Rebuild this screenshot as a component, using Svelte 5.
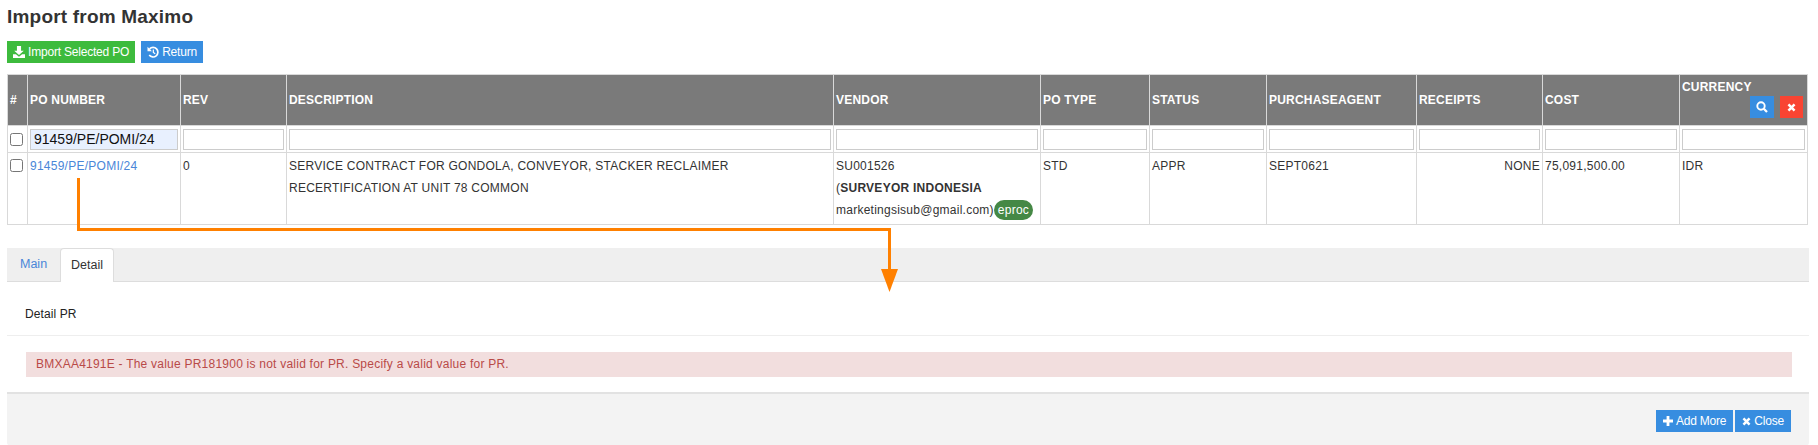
<script>
  const columns = [
    { label: "#", width: 20 },
    { label: "PO NUMBER", width: 153 },
    { label: "REV", width: 106 },
    { label: "DESCRIPTION", width: 547 },
    { label: "VENDOR", width: 207 },
    { label: "PO TYPE", width: 109 },
    { label: "STATUS", width: 117 },
    { label: "PURCHASEAGENT", width: 150 },
    { label: "RECEIPTS", width: 126 },
    { label: "COST", width: 137 },
    { label: "CURRENCY", width: 128 },
  ];
</script>

<div class="page">
  <h1>Import from Maximo</h1>

  <div class="toolbar">
    <button class="btn green">
      <svg viewBox="0 0 14 14" width="12" height="12"><path d="M4.6 0h4.8v5.4h3.2L7 10.6 1.4 5.4h3.2zM0 9.6h3.4L7 12.4l3.6-2.8H14V14H0z" fill="currentColor" /></svg>
      Import Selected PO
    </button>
    <button class="btn blue">
      <svg viewBox="0 0 14 14" width="12" height="12"><path d="M3 3.4A5.6 5.6 0 1 1 2.6 10.6" fill="none" stroke="currentColor" stroke-width="2" /><path d="M0.6 1v5.2h5.2z" fill="currentColor" /><path d="M7.4 4v3.6l2.2 1.4" fill="none" stroke="currentColor" stroke-width="1.4" /></svg>
      Return
    </button>
  </div>

  <table>
    <colgroup>
      {#each columns as col}
        <col style="width: {col.width}px" />
      {/each}
    </colgroup>
    <thead>
      <tr>
        {#each columns as col}
          {#if col.label === "CURRENCY"}
            <th class="currency">
              {col.label}
              <div class="head-actions">
                <span class="icon-btn blue">
                  <svg viewBox="0 0 12 12" width="12" height="12"><circle cx="5" cy="5" r="3.7" fill="none" stroke="currentColor" stroke-width="1.9" /><path d="M7.8 7.8L11 11" stroke="currentColor" stroke-width="2.3" /></svg>
                </span>
                <span class="icon-btn red narrow">
                  <svg viewBox="0 0 10 10" width="9" height="9"><path d="M1.6 1.6l6.8 6.8M8.4 1.6L1.6 8.4" stroke="currentColor" stroke-width="2.8" /></svg>
                </span>
              </div>
            </th>
          {:else}
            <th>{col.label}</th>
          {/if}
        {/each}
      </tr>
      <tr class="filters">
        <td class="check"><input type="checkbox" /></td>
        <td><input class="filter filled" type="text" value="91459/PE/POMI/24" /></td>
        {#each columns.slice(2) as col}
          <td><input class="filter" type="text" aria-label={col.label} /></td>
        {/each}
      </tr>
    </thead>
    <tbody>
      <tr>
        <td class="check"><input type="checkbox" /></td>
        <td><a href="#po">91459/PE/POMI/24</a></td>
        <td>0</td>
        <td>SERVICE CONTRACT FOR GONDOLA, CONVEYOR, STACKER RECLAIMER RECERTIFICATION AT UNIT 78 COMMON</td>
        <td>SU001526<br />(<b>SURVEYOR INDONESIA</b><br /><span class="nowrap">marketingsisub@gmail.com)<span class="badge">eproc</span></span></td>
        <td>STD</td>
        <td>APPR</td>
        <td>SEPT0621</td>
        <td class="right">NONE</td>
        <td>75,091,500.00</td>
        <td>IDR</td>
      </tr>
    </tbody>
  </table>

  <div class="panel">
    <div class="tabs">
      <a class="tab" href="#main">Main</a>
      <span class="tab active">Detail</span>
    </div>
    <div class="panel-title">Detail PR</div>
    <div class="panel-body">
      <div class="alert">BMXAA4191E - The value PR181900 is not valid for PR. Specify a valid value for PR.</div>
    </div>
    <div class="panel-footer">
      <button class="btn blue wide">
        <svg viewBox="0 0 10 10" width="10" height="10"><path d="M5 0v10M0 5h10" stroke="currentColor" stroke-width="2.8" /></svg>
        Add More
      </button>
      <button class="btn blue wide">
        <svg viewBox="0 0 10 10" width="9" height="9"><path d="M1.6 1.6l6.8 6.8M8.4 1.6L1.6 8.4" stroke="currentColor" stroke-width="2.8" /></svg>
        Close
      </button>
    </div>
  </div>

  <svg class="arrow" width="1818" height="445" viewBox="0 0 1818 445">
    <path d="M78.5 178V229.5H889.5V270" fill="none" stroke="#ff8000" stroke-width="3" />
    <path d="M881 269H898L889.5 292z" fill="#ff8000" />
  </svg>
</div>

<style>
  :global(body) {
    margin: 0;
    background: #fff;
    font-family: "Liberation Sans", Arial, sans-serif;
    font-size: 12px;
    color: #333;
  }

  .page {
    position: relative;
    width: 1818px;
    height: 445px;
    overflow: hidden;
    padding: 7px 9px 0 7px;
    box-sizing: border-box;
  }

  h1 {
    margin: 0;
    font-size: 19px;
    line-height: 20px;
    font-weight: bold;
    color: #333;
    letter-spacing: 0.2px;
  }

  .toolbar {
    display: flex;
    gap: 6px;
    margin-top: 14px;
  }

  .btn {
    display: inline-flex;
    align-items: center;
    gap: 3px;
    height: 22px;
    padding: 0 6px;
    border: 0;
    font-family: inherit;
    font-size: 12px;
    letter-spacing: -0.2px;
    color: #fff;
  }

  .btn.wide {
    padding: 0 7px;
  }

  .green {
    background: #3dbb3d;
  }

  .blue {
    background: #378de0;
  }

  .red {
    background: #f94432;
  }

  table {
    width: 1801px;
    margin-top: 11px;
    border-collapse: collapse;
    table-layout: fixed;
    letter-spacing: 0.25px;
  }

  th,
  td {
    box-sizing: border-box;
    border: 1px solid #d9d9d9;
    padding: 0 2px;
    text-align: left;
    vertical-align: top;
    overflow: hidden;
  }

  th {
    height: 51px;
    background: #7a7a7a;
    color: #fff;
    font-size: 12px;
    letter-spacing: 0.2px;
    vertical-align: middle;
    white-space: nowrap;
  }

  th.currency {
    vertical-align: top;
    padding-top: 5px;
    line-height: 14px;
  }

  .head-actions {
    display: flex;
    justify-content: flex-end;
    gap: 6px;
    padding-right: 2px;
    margin-top: 2px;
  }

  .icon-btn {
    display: inline-flex;
    align-items: center;
    justify-content: center;
    width: 24px;
    height: 22px;
    color: #fff;
  }

  .icon-btn.narrow {
    width: 23px;
  }

  .filters td {
    height: 27px;
    vertical-align: middle;
  }

  .filter {
    display: block;
    box-sizing: border-box;
    width: 100%;
    height: 21px;
    padding: 0 3px;
    border: 1px solid #ccc;
    font-family: inherit;
    font-size: 14px;
    color: #111;
    background: #fff;
  }

  .filter.filled {
    background: #e8f0fe;
  }

  input[type="checkbox"] {
    display: block;
    width: 13px;
    height: 13px;
    margin: 0;
  }

  tbody td {
    height: 72px;
    padding-top: 2px;
    line-height: 22px;
  }

  .check {
    padding: 3px 2px;
  }

  tbody td:first-child {
    padding-top: 6px;
  }

  .right {
    text-align: right;
  }

  .nowrap {
    white-space: nowrap;
  }

  a {
    color: #4a86d8;
    text-decoration: none;
  }

  .badge {
    display: inline-block;
    padding: 0 4px;
    border-radius: 10px;
    background: #458845;
    color: #fff;
    line-height: 20px;
  }

  .panel {
    margin-top: 23px;
    width: 1802px;
  }

  .tabs {
    display: flex;
    height: 34px;
    box-sizing: border-box;
    background: #efefef;
    border-bottom: 1px solid #ddd;
  }

  .tab {
    padding: 9px 13px 0;
    font-size: 12.5px;
    height: 34px;
    box-sizing: border-box;
  }

  .tab.active {
    padding: 9px 10px 0;
    background: #fff;
    border: 1px solid #ddd;
    border-bottom: 0;
    border-radius: 4px 4px 0 0;
  }

  .panel-title {
    height: 53px;
    line-height: 65px;
    padding-left: 18px;
    border-bottom: 1px solid #eee;
    color: #222;
    letter-spacing: 0.1px;
  }

  .panel-body {
    padding: 16px 17px 15px 19px;
    border-bottom: 2px solid #e2e2e2;
  }

  .alert {
    height: 25px;
    line-height: 25px;
    padding-left: 10px;
    background: #f2dede;
    color: #b94a48;
    letter-spacing: 0.23px;
  }

  .panel-footer {
    display: flex;
    justify-content: flex-end;
    gap: 2px;
    height: 52px;
    padding: 16px 18px 0 0;
    box-sizing: border-box;
    background: #f3f3f3;
    border-radius: 0 0 4px 4px;
  }

  .arrow {
    position: absolute;
    left: 0;
    top: 0;
    pointer-events: none;
  }
</style>
